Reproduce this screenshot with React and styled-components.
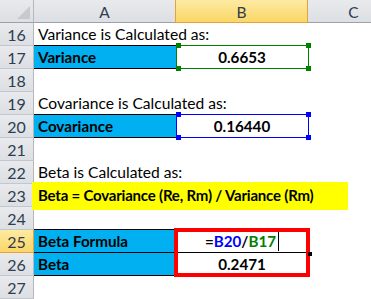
import React from 'react';
import styled, { createGlobalStyle, css } from 'styled-components';

const GlobalStyle = createGlobalStyle`
  html, body { margin: 0; padding: 0; background: #ffffff; overflow: hidden; }
  body { font-family: Lato, "Open Sans", sans-serif; }
`;

const COLS = '34px 142px 132px 92px';

const Sheet = styled.div`
  display: flex;
  flex-direction: column;
  width: 371px;
  height: 299px;
  overflow: hidden;
`;

const HeaderRow = styled.div`
  display: grid;
  grid-template-columns: ${COLS};
  height: 23px;
`;

const headerBg = css`
  background: linear-gradient(#e8eaed, #dcdfe3);
`;
const selectedBg = css`
  background: linear-gradient(#feeaa3, #fad665);
`;

const Corner = styled.div`
  ${headerBg};
  box-sizing: border-box;
  border-right: 1px solid #b4b8be;
  border-bottom: 1px solid #9ea2a8;
  position: relative;
  &::after {
    content: '';
    position: absolute;
    right: 3px;
    bottom: 3px;
    width: 13px;
    height: 13px;
    background: #c6c9cd;
    clip-path: polygon(100% 0, 100% 100%, 0 100%);
  }
`;

const ColHeader = styled.div`
  ${(p) => (p.$selected ? selectedBg : headerBg)};
  box-sizing: border-box;
  border-right: 1px solid ${(p) => (p.$selected ? '#e8a23d' : '#b4b8be')};
  border-bottom: 1px solid ${(p) => (p.$selected ? '#e8a23d' : '#9ea2a8')};
  ${(p) => p.$selected && css`margin-left: -1px; border-left: 1px solid #e8a23d;`}
  display: flex;
  align-items: center;
  justify-content: center;
  font-size: 15.5px;
  color: #2f3d4f;
  padding-top: 1px;
`;

const Row = styled.div`
  display: grid;
  grid-template-columns: ${COLS};
  height: 23px;
`;

const RowHeader = styled.div`
  ${(p) => (p.$selected ? selectedBg : headerBg)};
  box-sizing: border-box;
  border-right: 1px solid ${(p) => (p.$selected ? '#e8a23d' : '#b4b8be')};
  border-bottom: 1px solid ${(p) => (p.$selected ? '#e8a23d' : '#c3c6cb')};
  display: flex;
  align-items: center;
  justify-content: center;
  font-size: 16px;
  color: #2f3d4f;
  padding-top: 1px;
`;

const Cell = styled.div`
  position: relative;
  box-sizing: border-box;
  height: 23px;
  line-height: 22px;
  font-size: ${(p) => (p.$bold ? '15.2px' : '15.6px')};
  color: #000;
  white-space: nowrap;
  padding: 0 4px;
  text-align: ${(p) => p.$align || 'left'};
  font-weight: ${(p) => (p.$bold ? 700 : 400)};
  background: ${(p) => p.$fill || 'transparent'};
  box-shadow: ${(p) =>
    [p.$top && '0 -1px 0 #000', p.$bottom && 'inset 0 -1px 0 #000'].filter(Boolean).join(', ') || 'none'};
  z-index: ${(p) => (p.$front ? 2 : 'auto')};
`;

const RefBox = styled.div`
  position: absolute;
  left: 0;
  top: -1px;
  right: -1px;
  bottom: 0;
  border: 1px solid ${(p) => p.$color};
  pointer-events: none;
`;

const Handle = styled.span`
  position: absolute;
  width: 5px;
  height: 5px;
  background: ${(p) => p.$color};
  ${(p) => (p.$x === 'l' ? 'left: -1px;' : 'right: -3px;')}
  ${(p) => (p.$y === 't' ? 'top: -3px;' : 'bottom: -3px;')}
`;

const Highlight = styled.span`
  display: inline-block;
  margin-left: -6px;
  margin-top: -2px;
  padding-left: 6px;
  width: 310px;
  height: 28px;
  line-height: 27px;
  background: #ffff00;
  font-weight: 700;
  font-size: 15px;
  letter-spacing: -0.2px;
`;

const RedBox = styled.div`
  position: absolute;
  left: -2px;
  top: -2px;
  width: 136px;
  height: 49px;
  box-sizing: border-box;
  border: 4px solid #ff0000;
  pointer-events: none;
`;

const FillHandle = styled.span`
  position: absolute;
  right: -4px;
  bottom: -3px;
  width: 4px;
  height: 4px;
  background: #000;
`;

const Ref = styled.span`
  color: ${(p) => p.$color};
`;

const Caret = styled.span`
  display: inline-block;
  width: 1px;
  height: 21px;
  background: #000;
  margin-left: 2px;
  vertical-align: top;
`;

const BLUE = '#00b0f0';

const RefOutline = ({ color }) => (
  <RefBox $color={color}>
    <Handle $color={color} $x="l" $y="t" />
    <Handle $color={color} $x="r" $y="t" />
    <Handle $color={color} $x="l" $y="b" />
    <Handle $color={color} $x="r" $y="b" />
  </RefBox>
);

export default function App() {
  return (
    <>
      <GlobalStyle />
      <Sheet>
        <HeaderRow>
          <Corner />
          <ColHeader>A</ColHeader>
          <ColHeader $selected>B</ColHeader>
          <ColHeader>C</ColHeader>
        </HeaderRow>

        <Row>
          <RowHeader>16</RowHeader>
          <Cell>Variance is Calculated as:</Cell>
          <Cell />
          <Cell />
        </Row>
        <Row>
          <RowHeader>17</RowHeader>
          <Cell $fill={BLUE} $bold $top $bottom>Variance</Cell>
          <Cell $bold $align="center">
            0.6653
            <RefOutline color="#008000" />
          </Cell>
          <Cell />
        </Row>
        <Row>
          <RowHeader>18</RowHeader>
          <Cell />
          <Cell />
          <Cell />
        </Row>
        <Row>
          <RowHeader>19</RowHeader>
          <Cell>Covariance is Calculated as:</Cell>
          <Cell />
          <Cell />
        </Row>
        <Row>
          <RowHeader>20</RowHeader>
          <Cell $fill={BLUE} $bold $top $bottom>Covariance</Cell>
          <Cell $bold $align="center">
            0.16440
            <RefOutline color="#0000ff" />
          </Cell>
          <Cell />
        </Row>
        <Row>
          <RowHeader>21</RowHeader>
          <Cell />
          <Cell />
          <Cell />
        </Row>
        <Row>
          <RowHeader>22</RowHeader>
          <Cell>Beta is Calculated as:</Cell>
          <Cell />
          <Cell />
        </Row>
        <Row>
          <RowHeader>23</RowHeader>
          <Cell>
            <Highlight>Beta = Covariance (Re, Rm) / Variance (Rm)</Highlight>
          </Cell>
          <Cell />
          <Cell />
        </Row>
        <Row>
          <RowHeader>24</RowHeader>
          <Cell />
          <Cell />
          <Cell />
        </Row>
        <Row>
          <RowHeader $selected>25</RowHeader>
          <Cell $fill={BLUE} $bold $top $bottom>Beta Formula</Cell>
          <Cell $bold $align="center" $bottom $front>
            =<Ref $color="#0000ff">B20</Ref>/<Ref $color="#008000">B17</Ref>
            <Caret />
            <RedBox />
            <FillHandle />
          </Cell>
          <Cell />
        </Row>
        <Row>
          <RowHeader>26</RowHeader>
          <Cell $fill={BLUE} $bold $bottom>Beta</Cell>
          <Cell $bold $align="center">0.2471</Cell>
          <Cell />
        </Row>
        <Row>
          <RowHeader>27</RowHeader>
          <Cell />
          <Cell />
          <Cell />
        </Row>
      </Sheet>
    </>
  );
}
